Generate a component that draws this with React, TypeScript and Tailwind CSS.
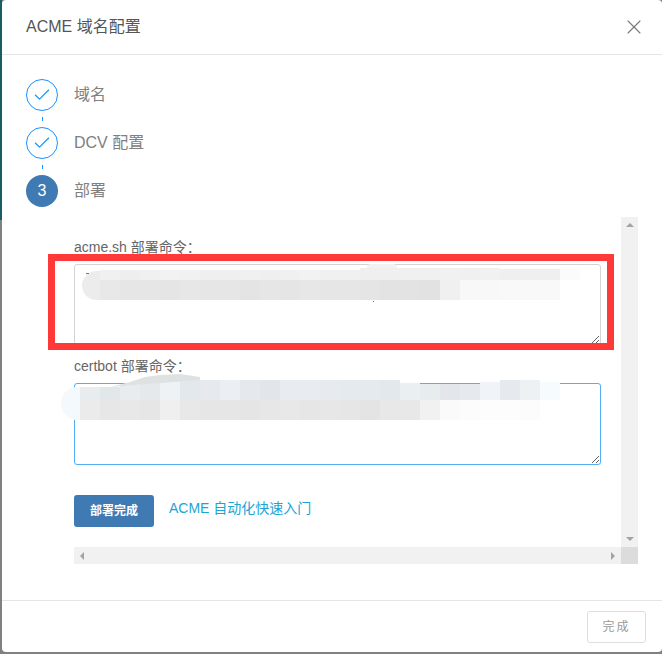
import { Check, X } from 'lucide-react'

const ROW_A_TOP = [
  'h-[10px] bg-[#f0f0f0]', 'h-[10px] bg-[#eeeeee]', 'h-[10px] bg-[#f0f0f0]', 'h-[10px] bg-[#f2f2f2]', 'h-[10px] bg-[#f1f1f1]', 'h-[10px] bg-[#efefef]', 'h-[10px] bg-[#efefef]', 'h-[10px] bg-[#f0f0f0]',
  'h-[10px] bg-[#efefef]', 'h-[10px] bg-[#f0f0f0]', 'h-[10px] bg-[#f2f2f2]', 'h-[10px] bg-[#f0f0f0]', 'h-[10px] bg-[#f0f0f0]', 'h-3 bg-[#efefef]', 'h-3 bg-[#efefef]', 'h-3 bg-[#f0f0f0]',
  'h-3 bg-[#f0f0f0]', 'h-3 bg-[#f1f1f1]', 'h-3 bg-[#f0f0f0]', 'h-3 bg-[#f1f1f1]', 'h-[11px] bg-[#efefef]', 'h-[11px] bg-[#efefef]', 'h-[11px] bg-[#efefef]', 'h-[11px] bg-[#fbfbfb]',
]
const ROW_A_BOTTOM = [
  'h-5 bg-[#e8e8e8]', 'h-5 bg-[#e6e6e6]', 'h-5 bg-[#e6e6e6]', 'h-5 bg-[#e5e5e5]', 'h-5 bg-[#e7e7e7]', 'h-5 bg-[#e6e6e6]', 'h-5 bg-[#e6e6e6]', 'h-5 bg-[#e4e4e4]',
  'h-5 bg-[#e6e6e6]', 'h-5 bg-[#e5e5e5]', 'h-5 bg-[#e7e7e7]', 'h-5 bg-[#e6e6e6]', 'h-5 bg-[#e6e6e6]', 'h-5 bg-[#e5e5e5]', 'h-5 bg-[#e3e3e3]', 'h-5 bg-[#e3e3e3]',
  'h-5 bg-[#e2e2e2]', 'h-5 bg-[#f0f0f0]', 'h-5 bg-[#f8f8f8]', 'h-5 bg-[#f8f8f8]', 'h-5 bg-[#f9f9f9]', 'h-5 bg-[#f9f9f9]', 'h-5 bg-[#f9f9f9]', 'h-5 bg-white',
]
const ROW_B_TOP = [
  'h-[13px] bg-[#e8ecef]', 'h-[13px] bg-[#e2e7ea]', 'h-[15px] bg-[#e8ecee]', 'h-[17px] bg-[#e5e9eb]', 'h-5 bg-[#eef2f5]', 'h-5 bg-[#e3e8ec]', 'h-5 bg-[#e6eaee]', 'h-5 bg-[#ebeff3]',
  'h-5 bg-[#e5e9ee]', 'h-5 bg-[#e2e6eb]', 'h-5 bg-[#e8ecf1]', 'h-5 bg-[#e8ecf0]', 'h-5 bg-[#e7ebef]', 'h-5 bg-[#e5eaee]', 'h-5 bg-[#e5eaee]', 'h-5 bg-[#e3e8ec]',
  'h-[17px] bg-[#eaeff2]', 'h-4 bg-[#e7ecef]', 'h-4 bg-[#e3e6ea]', 'h-4 bg-[#e6e9ed]', 'h-[18px] bg-[#f0f3f7]', 'h-5 bg-[#e6e9ed]', 'h-5 bg-[#edf1f4]', 'h-[18px] bg-[#f6fbfe]',
]
const ROW_B_BOTTOM = [
  'h-5 bg-[#ebebeb]', 'h-5 bg-[#e7e7e7]', 'h-5 bg-[#e8e8e8]', 'h-5 bg-[#e6e6e6]', 'h-5 bg-[#efefef]', 'h-5 bg-[#e8e8e8]', 'h-5 bg-[#e6e6e6]', 'h-5 bg-[#e6e6e6]',
  'h-5 bg-[#e5e5e5]', 'h-5 bg-[#e7e7e7]', 'h-5 bg-[#e8e8e8]', 'h-5 bg-[#e6e6e6]', 'h-5 bg-[#e7e7e7]', 'h-5 bg-[#e6e6e6]', 'h-5 bg-[#e4e4e4]', 'h-5 bg-[#e8e8e8]',
  'h-5 bg-[#e8e8e8]', 'h-5 bg-[#f1f1f1]', 'h-5 bg-[#fafafa]', 'h-5 bg-[#fcfcfc]', 'h-5 bg-[#fdfdfd]', 'h-5 bg-[#fdfdfd]', 'h-5 bg-[#fcfcfc]',
]

function CellRow({ cells }: { cells: string[] }) {
  return (
    <div className="flex items-end h-full">
      {cells.map((cell, i) => (
        <div key={i} className={`w-5 ${cell}`} />
      ))}
    </div>
  )
}

function DoneStep({ label }: { label: string }) {
  return (
    <div className="flex items-center gap-4 h-8">
      <div className="w-8 h-8 rounded-full border border-[#1890ff] flex items-center justify-center text-[#1890ff]">
        <Check size={20} strokeWidth={1.4} />
      </div>
      <span className="text-[16px] text-[#808080]">{label}</span>
    </div>
  )
}

function Connector() {
  return (
    <div className="h-4 flex items-center pl-4">
      <div className="w-px h-1 bg-[#1890ff]" />
    </div>
  )
}

export default function App() {
  return (
    <div className="relative h-[654px] w-[662px] overflow-hidden bg-[#808080] font-['Liberation_Sans','Noto_Sans_CJK_SC',sans-serif]">
      <div className="absolute left-0 top-0 w-[2px] h-[220px] bg-[#1b5c66]" />
      <div className="relative ml-[2px] w-[660px] h-[652px] bg-white rounded-[4px] flex flex-col">
        <div className="h-[55px] shrink-0 border-b border-[#e5e5e5] flex items-center justify-between pl-6 pr-4">
          <span className="text-[16px] text-[#555555]">ACME 域名配置</span>
          <X size={24} strokeWidth={1.1} className="text-[#777777]" />
        </div>

        <div className="pt-6 pl-6 shrink-0">
          <DoneStep label="域名" />
          <Connector />
          <DoneStep label="DCV 配置" />
          <Connector />
          <div className="flex items-center gap-4 h-8">
            <div className="w-8 h-8 rounded-full bg-[#3f7ab2] flex items-center justify-center text-white text-[16px]">
              3
            </div>
            <span className="text-[16px] text-[#808080]">部署</span>
          </div>
        </div>

        <div className="mt-[10px] ml-[72px] w-[564px] h-[347px] shrink-0 flex flex-col">
          <div className="flex flex-1 min-h-0">
            <div className="w-[547px] pt-[22px]">
              <div className="text-[14px] leading-[16px] text-[#666666] mb-[9px]">acme.sh 部署命令：</div>
              <textarea
                readOnly
                className="block w-[527px] h-[81px] rounded-[3px] border border-[#d4d4d4] outline-none resize-y"
              />
              <div className="text-[14px] leading-[16px] text-[#666666] mt-[13px] mb-[9px]">certbot 部署命令：</div>
              <textarea
                readOnly
                className="block w-[527px] h-[82px] rounded-[3px] border border-[#52aef5] outline-none resize-y"
              />
              <div className="flex items-center gap-[15px] mt-[30px]">
                <button className="w-20 h-8 rounded-[3px] bg-[#3f7ab2] text-white text-[12px] font-bold">部署完成</button>
                <a className="text-[14px] text-[#1ba5d3] mb-[6px]">ACME 自动化快速入门</a>
              </div>
            </div>
            <div className="w-[17px] bg-[#f1f1f1] flex flex-col items-center justify-between py-[6px]">
              <div className="w-0 h-0 border-x-[4px] border-x-transparent border-b-[4px] border-b-[#a3a3a3]" />
              <div className="w-0 h-0 border-x-[4px] border-x-transparent border-t-[4px] border-t-[#a3a3a3]" />
            </div>
          </div>
          <div className="flex h-[17px] shrink-0">
            <div className="w-[547px] bg-[#f1f1f1] flex items-center justify-between px-[6px]">
              <div className="w-0 h-0 border-y-[4px] border-y-transparent border-r-[4px] border-r-[#a3a3a3]" />
              <div className="w-0 h-0 border-y-[4px] border-y-transparent border-l-[4px] border-l-[#a3a3a3]" />
            </div>
            <div className="w-[17px] bg-[#dcdcdc]" />
          </div>
        </div>

        <div className="mt-[36px] flex-1 border-t border-[#e5e5e5] flex justify-end items-start pt-[10px] pr-4">
          <button className="w-[59px] h-8 rounded-[3px] border border-[#dddddd] text-[12px] text-[#999999] tracking-[2px]">完成</button>
        </div>
      </div>

      {/* blurred-out commands, first box */}
      <div className="absolute left-[82px] top-[271px] w-[18px] h-[29px] rounded-l-full bg-[#ececec]" />
      <div className="absolute left-[100px] top-[268px] h-3">
        <CellRow cells={ROW_A_TOP} />
      </div>
      <div className="absolute left-[100px] top-[280px] h-5">
        <CellRow cells={ROW_A_BOTTOM} />
      </div>
      <div className="absolute left-[367px] top-[264px] w-[30px] h-1 rounded-t-full bg-[#f2f2f2]" />
      <div className="absolute left-[86px] top-[273px] w-[3px] h-px bg-[#777777]" />
      <div className="absolute left-[373px] top-[301px] w-px h-px bg-[#777777]" />

      {/* blurred-out commands, second box */}
      <div className="absolute left-[61px] top-[387px] w-[19px] h-[33px] rounded-l-full bg-[#f3f9fc]" />
      <div className="absolute left-[80px] top-[380px] h-5">
        <CellRow cells={ROW_B_TOP} />
      </div>
      <div className="absolute left-[80px] top-[400px] h-5">
        <CellRow cells={ROW_B_BOTTOM} />
      </div>
      <svg className="absolute left-[110px] top-[373px]" width="90" height="14" viewBox="0 0 90 14">
        <polygon points="0,14 20,9 35,4 50,2 70,1 90,4 90,7 0,14" fill="#dfe2e2" />
      </svg>

      <div className="absolute left-[48px] top-[254px] w-[566px] h-[96px] border-[7px] border-[#ff3838]" />
    </div>
  )
}
